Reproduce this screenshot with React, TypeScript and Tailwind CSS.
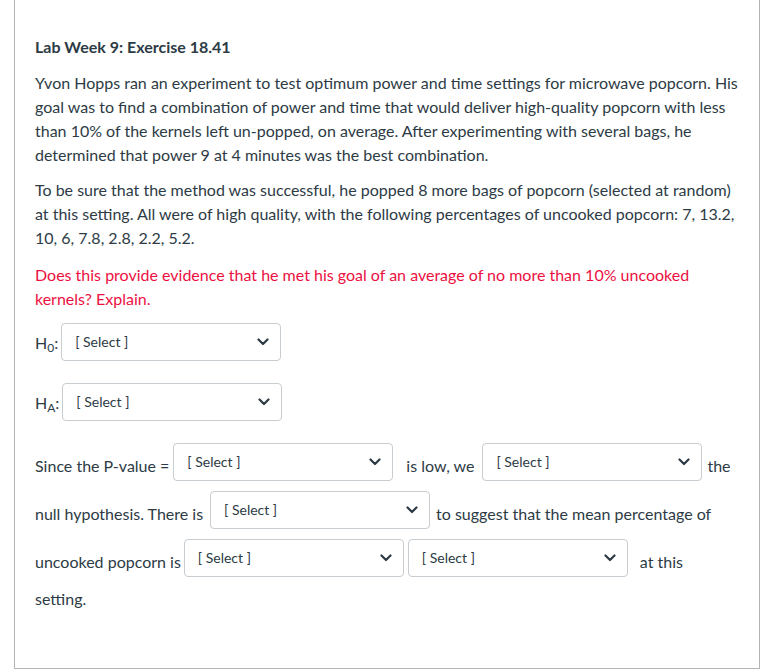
import React from "react";

function Chevron() {
  return (
    <svg width="12" height="8" viewBox="0 0 12 8" className="shrink-0">
      <path d="M1.5 1.5 L6 6 L10.5 1.5" fill="none" stroke="#2d3b45" strokeWidth="2.2" strokeLinecap="round" strokeLinejoin="round" />
    </svg>
  );
}

function Sel({ className = "" }: { className?: string }) {
  return (
    <div
      className={
        "flex h-[38px] w-[220px] shrink-0 items-center justify-between rounded-[4px] border border-[#c7cdd1] bg-white pl-[13px] pr-[11px] " +
        className
      }
    >
      <span className="text-[14px] text-[#2d3b45] -mt-[1px]">[ Select ]</span>
      <Chevron />
    </div>
  );
}

export default function App() {
  return (
    <div
      className="w-[776px] h-[671px] bg-white overflow-hidden"
      style={{ fontFamily: "Lato, 'Open Sans', sans-serif" }}
    >
      <div className="ml-[14px] w-[746px] mt-[-20px] h-[689px] border border-[#b4b4b4] px-[20px] pt-[54px] text-[16px] leading-[24px] text-[#2d3b45]">
        <div className="font-bold text-[16px] leading-[24px]">Lab Week 9: Exercise 18.41</div>
        <p className="mt-[12px]">
          Yvon Hopps ran an experiment to test optimum power and time settings for microwave popcorn. His goal was to find a combination of power and time that would deliver high-quality popcorn with less than 10% of the kernels left un-popped, on average. After experimenting with several bags, he determined that power 9 at 4 minutes was the best combination.
        </p>
        <p className="mt-[11px]">
          To be sure that the method was successful, he popped 8 more bags of popcorn (selected at random) at this setting. All were of high quality, with the following percentages of uncooked popcorn: 7, 13.2, 10, 6, 7.8, 2.8, 2.2, 5.2.
        </p>
        <p className="mt-[13px] text-[#ec1041]">
          Does this provide evidence that he met his goal of an average of no more than 10% uncooked kernels? Explain.
        </p>

        <div className="mt-[12px] flex items-center h-[38px]">
          <span className="mt-[2px]">
            H<sub className="text-[12px]">0</sub>:
          </span>
          <Sel className="ml-[3px]" />
        </div>
        <div className="mt-[22px] flex items-center h-[38px]">
          <span className="mt-[2px]">
            H<sub className="text-[12px]">A</sub>:
          </span>
          <Sel className="ml-[3px]" />
        </div>

        <div className="mt-[22px] flex items-center h-[38px]">
          <span className="mt-[7px]">Since the P-value =</span>
          <Sel className="ml-[4px]" />
          <span className="mt-[7px] ml-[13px]">is low, we</span>
          <Sel className="ml-[8px]" />
          <span className="mt-[7px] ml-[5px]">the</span>
        </div>
        <div className="mt-[10px] flex items-center h-[38px]">
          <span className="mt-[7px]">null hypothesis. There is</span>
          <Sel className="ml-[7px]" />
          <span className="mt-[7px] ml-[6px]">to suggest that the mean percentage of</span>
        </div>
        <div className="mt-[10px] flex items-center h-[38px]">
          <span className="mt-[7px]">uncooked popcorn is</span>
          <Sel className="ml-[3px]" />
          <Sel className="ml-[4px]" />
          <span className="mt-[7px] ml-[12px]">at this</span>
        </div>
        <div className="mt-[10px]">setting.</div>
      </div>
    </div>
  );
}
